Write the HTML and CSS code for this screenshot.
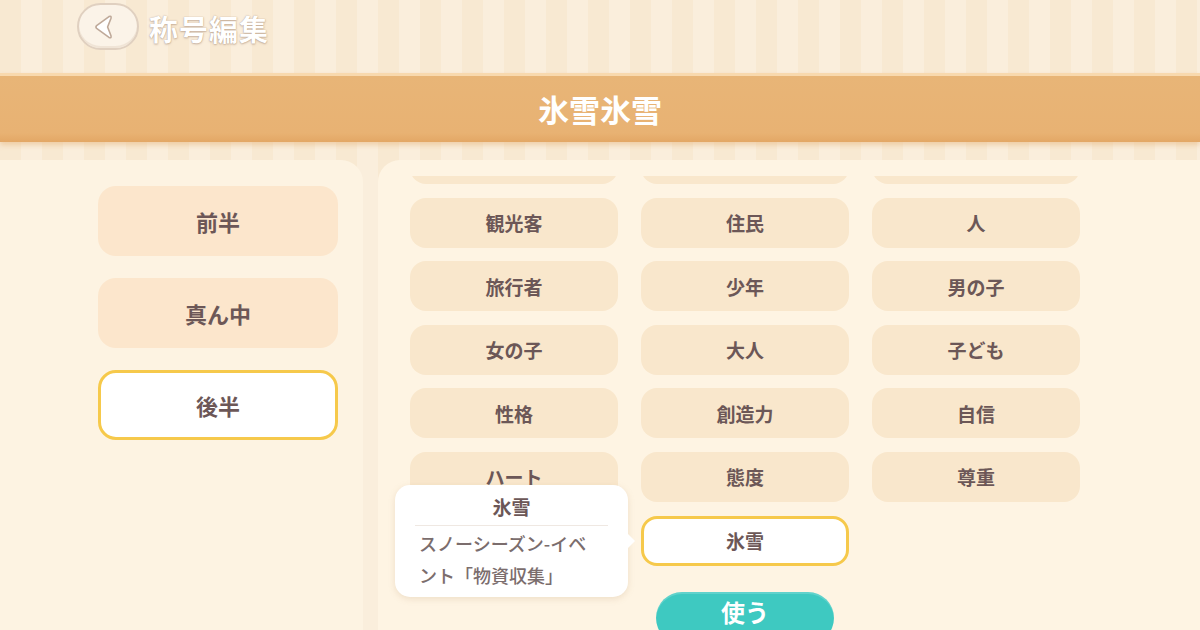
FILE: index.html
```html
<!DOCTYPE html>
<html lang="ja">
<head>
<meta charset="utf-8">
<title>称号編集</title>
<link rel="stylesheet" href="styles.css">
</head>
<body>
<div class="screen">
  <header class="topbar">
    <button class="back" aria-label="戻る">
      <svg width="24" height="26" viewBox="0 0 24 26">
        <path d="M17 2.6 L4.6 11.6 Q3.2 13 4.6 14.4 L17 23.4 Q19.6 24.6 19 21.8 L15.6 13 L19 4.2 Q19.6 1.4 17 2.6 Z" fill="#ffffff" stroke="#bfa999" stroke-width="1.6" stroke-linejoin="round"/>
      </svg>
    </button>
    <h1 class="page-title">称号編集</h1>
  </header>

  <div class="band"><span class="band-title">氷雪氷雪</span></div>

  <main class="content">
    <aside class="side">
      <button class="side-btn">前半</button>
      <button class="side-btn">真ん中</button>
      <button class="side-btn is-selected">後半</button>
    </aside>

    <section class="list">
      <div class="scroll">
        <div class="grid">
          <div class="cell"></div>
          <div class="cell"></div>
          <div class="cell"></div>
          <div class="cell">観光客</div>
          <div class="cell">住民</div>
          <div class="cell">人</div>
          <div class="cell">旅行者</div>
          <div class="cell">少年</div>
          <div class="cell">男の子</div>
          <div class="cell">女の子</div>
          <div class="cell">大人</div>
          <div class="cell">子ども</div>
          <div class="cell">性格</div>
          <div class="cell">創造力</div>
          <div class="cell">自信</div>
          <div class="cell">ハート</div>
          <div class="cell">態度</div>
          <div class="cell">尊重</div>
          <div class="cell is-selected col-2">氷雪</div>
        </div>
      </div>

      <div class="tooltip">
        <div class="tip-title">氷雪</div>
        <div class="tip-text">スノーシーズン-イベ<br>ント「物資収集」</div>
      </div>

      <button class="use-btn">使う</button>
    </section>
  </main>
</div>
</body>
</html>
```

FILE: styles.css
```css
* { box-sizing: border-box; }

html, body {
  margin: 0;
  padding: 0;
}

body {
  width: 1200px;
  height: 630px;
  overflow: hidden;
  font-family: "Noto Sans CJK JP", "Noto Sans", sans-serif;
  background: repeating-linear-gradient(90deg, #f8e9d2 0 21px, #faeedc 21px 42px);
}

.screen {
  display: flex;
  flex-direction: column;
  height: 630px;
}

/* ---------- top bar ---------- */
.topbar {
  height: 73px;
  display: flex;
  align-items: flex-start;
  padding: 3px 0 0 77px;
  gap: 10px;
}

.back {
  width: 62px;
  height: 47px;
  border-radius: 24px;
  border: 2px solid #e0d0c0;
  background: #fbf3e8;
  display: flex;
  align-items: center;
  justify-content: center;
  padding: 0 8px 0 0;
  box-shadow: inset 0 -2px 0 rgba(220, 200, 180, 0.35);
}

.page-title {
  margin: 5px 0 0;
  font-size: 29px;
  font-weight: 700;
  color: #ffffff;
  letter-spacing: 1px;
  line-height: 40px;
  text-shadow: 0 0 1px rgba(150, 120, 100, 0.7), 0 1px 2px rgba(160, 130, 110, 0.5);
}

/* ---------- band ---------- */
.band {
  height: 69px;
  background: linear-gradient(180deg, #f8d9ae 0 3px, #e8b577 3px, #e8b273 60px, #e3a765 100%);
  box-shadow: 0 3px 5px rgba(226, 170, 110, 0.45);
  display: flex;
  align-items: center;
  justify-content: center;
}

.band-title {
  font-size: 31px;
  font-weight: 700;
  color: #ffffff;
  line-height: 1;
  margin-top: 2px;
}

/* ---------- content ---------- */
.content {
  flex: 1;
  display: flex;
  gap: 15px;
  margin-top: 18px;
  min-height: 0;
}

.side {
  width: 363px;
  background: #fdf3e2;
  border-top-right-radius: 22px;
  display: flex;
  flex-direction: column;
  gap: 22px;
  padding: 26px 0 0 98px;
}

.side-btn {
  width: 240px;
  height: 70px;
  border: none;
  border-radius: 18px;
  background: #fce6cc;
  font-family: inherit;
  font-size: 22px;
  font-weight: 700;
  color: #6c5757;
  padding: 0;
}

.side-btn.is-selected {
  background: #ffffff;
  border: 3px solid #f6c94b;
}

.list {
  position: relative;
  flex: 1;
  background: #fef4e3;
  border-top-left-radius: 22px;
}

.scroll {
  margin-top: 16px;
  height: 440px;
  overflow: hidden;
  padding-left: 32px;
}

.grid {
  margin-top: -42px;
  display: grid;
  grid-template-columns: repeat(3, 208px);
  grid-auto-rows: 50px;
  column-gap: 23px;
  row-gap: 13.6px;
}

.cell {
  border-radius: 16px;
  background: #f9e7cc;
  display: flex;
  align-items: center;
  justify-content: center;
  font-size: 19px;
  font-weight: 700;
  color: #6c5757;
}

.cell.is-selected {
  background: #ffffff;
  border: 3px solid #f6c94b;
}

.col-2 { grid-column: 2; }

/* ---------- tooltip ---------- */
.tooltip {
  position: absolute;
  left: 17px;
  top: 325px;
  width: 233px;
  height: 112px;
  background: #ffffff;
  border-radius: 15px;
  box-shadow: 0 2px 6px rgba(190, 160, 120, 0.25);
  padding: 8px 14px 0 24px;
}

.tooltip::after {
  content: "";
  position: absolute;
  right: -7px;
  top: 48px;
  width: 0;
  height: 0;
  border-top: 8px solid transparent;
  border-bottom: 8px solid transparent;
  border-left: 8px solid #ffffff;
}

.tip-title {
  text-align: center;
  font-size: 19px;
  font-weight: 700;
  color: #6c5757;
  line-height: 28px;
  padding-bottom: 4px;
  border-bottom: 1px solid #efe8e2;
  margin: 0 6px 0 -4px;
}

.tip-text {
  font-size: 18px;
  font-weight: 500;
  color: #7b6d6d;
  line-height: 32px;
  margin-top: 1px;
  white-space: nowrap;
}

/* ---------- use button ---------- */
.use-btn {
  position: absolute;
  left: 278px;
  top: 432px;
  width: 178px;
  height: 52px;
  border: none;
  border-radius: 26px;
  background: #3ec9c1;
  box-shadow: inset 0 2px 0 rgba(255, 255, 255, 0.18);
  font-family: inherit;
  font-size: 24px;
  font-weight: 700;
  color: #ffffff;
  padding: 0 0 12px;
  line-height: 1;
}
```
